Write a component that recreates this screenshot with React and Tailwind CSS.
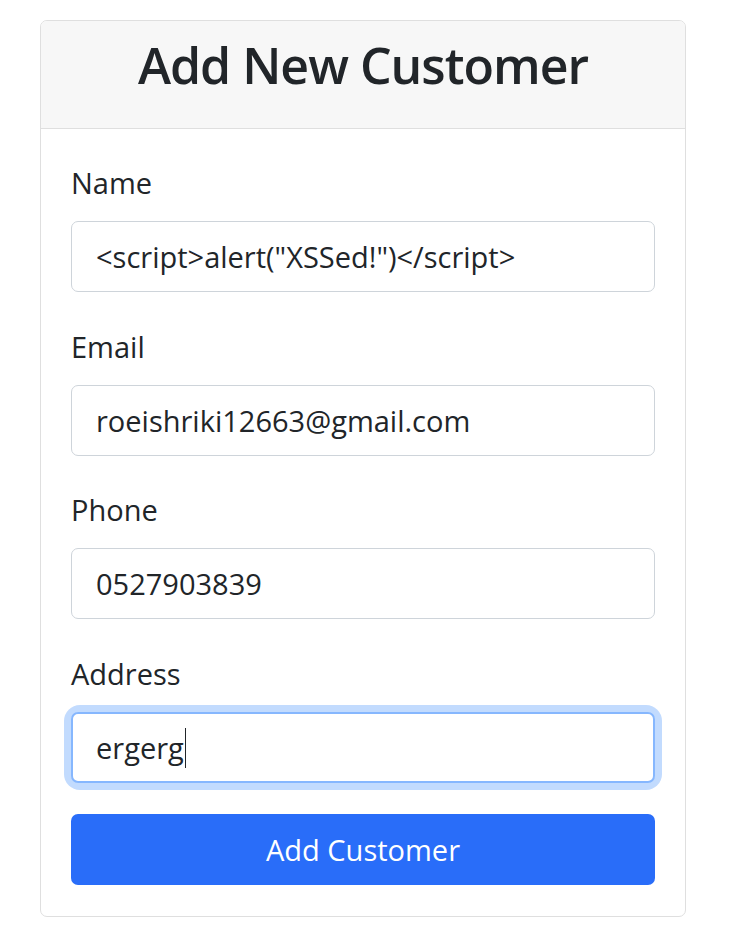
export default function App() {
  const font = { fontFamily: '"Open Sans", "Noto Sans", sans-serif' };
  const Field = ({ label, value, focused, mb }) => (
    <div className={mb}>
      <div className="text-[29px] leading-[36px] text-[#212529] mb-[20px]">{label}</div>
      {focused ? (
        <div className="rounded-[9px] shadow-[0_0_0_7px_rgba(13,110,253,0.25)]">
          <div className="h-[71px] rounded-[7px] border-2 border-[#86b7fe] bg-white flex items-center pl-[23px] text-[29px] text-[#212529]">
            <span>{value}</span>
            <span className="inline-block w-[1px] h-[40px] bg-[#212529] ml-[1px]" />
          </div>
        </div>
      ) : (
        <div className="h-[71px] rounded-[7px] border border-[#ced4da] bg-white flex items-center pl-[24px] text-[29px] text-[#212529] whitespace-pre">
          {value}
        </div>
      )}
    </div>
  );
  return (
    <div className="min-h-screen bg-white pt-[20px] pl-[40px]" style={font}>
      <div className="w-[646px] border border-[#dfdfdf] rounded-[7px] overflow-hidden">
        <div className="h-[108px] flex items-center justify-center bg-[#f7f7f7] border-b border-[#dfdfdf]">
          <h2 className="text-[50px] font-semibold tracking-[-1px] leading-[1.2] text-[#212529] mb-[20px]">Add New Customer</h2>
        </div>
        <div className="px-[30px] pt-[36px] pb-[31px]">
          <Field label="Name" value={'<script>alert("XSSed!")</script>'} mb="mb-[37px]" />
          <Field label="Email" value="roeishriki12663@gmail.com" mb="mb-[36px]" />
          <Field label="Phone" value="0527903839" mb="mb-[37px]" />
          <Field label="Address" value="ergerg" focused mb="mb-[31px]" />
          <button className="w-full h-[71px] rounded-[7px] bg-[#296df9] text-white text-[29px] flex items-center justify-center">
            Add Customer
          </button>
        </div>
      </div>
    </div>
  );
}
